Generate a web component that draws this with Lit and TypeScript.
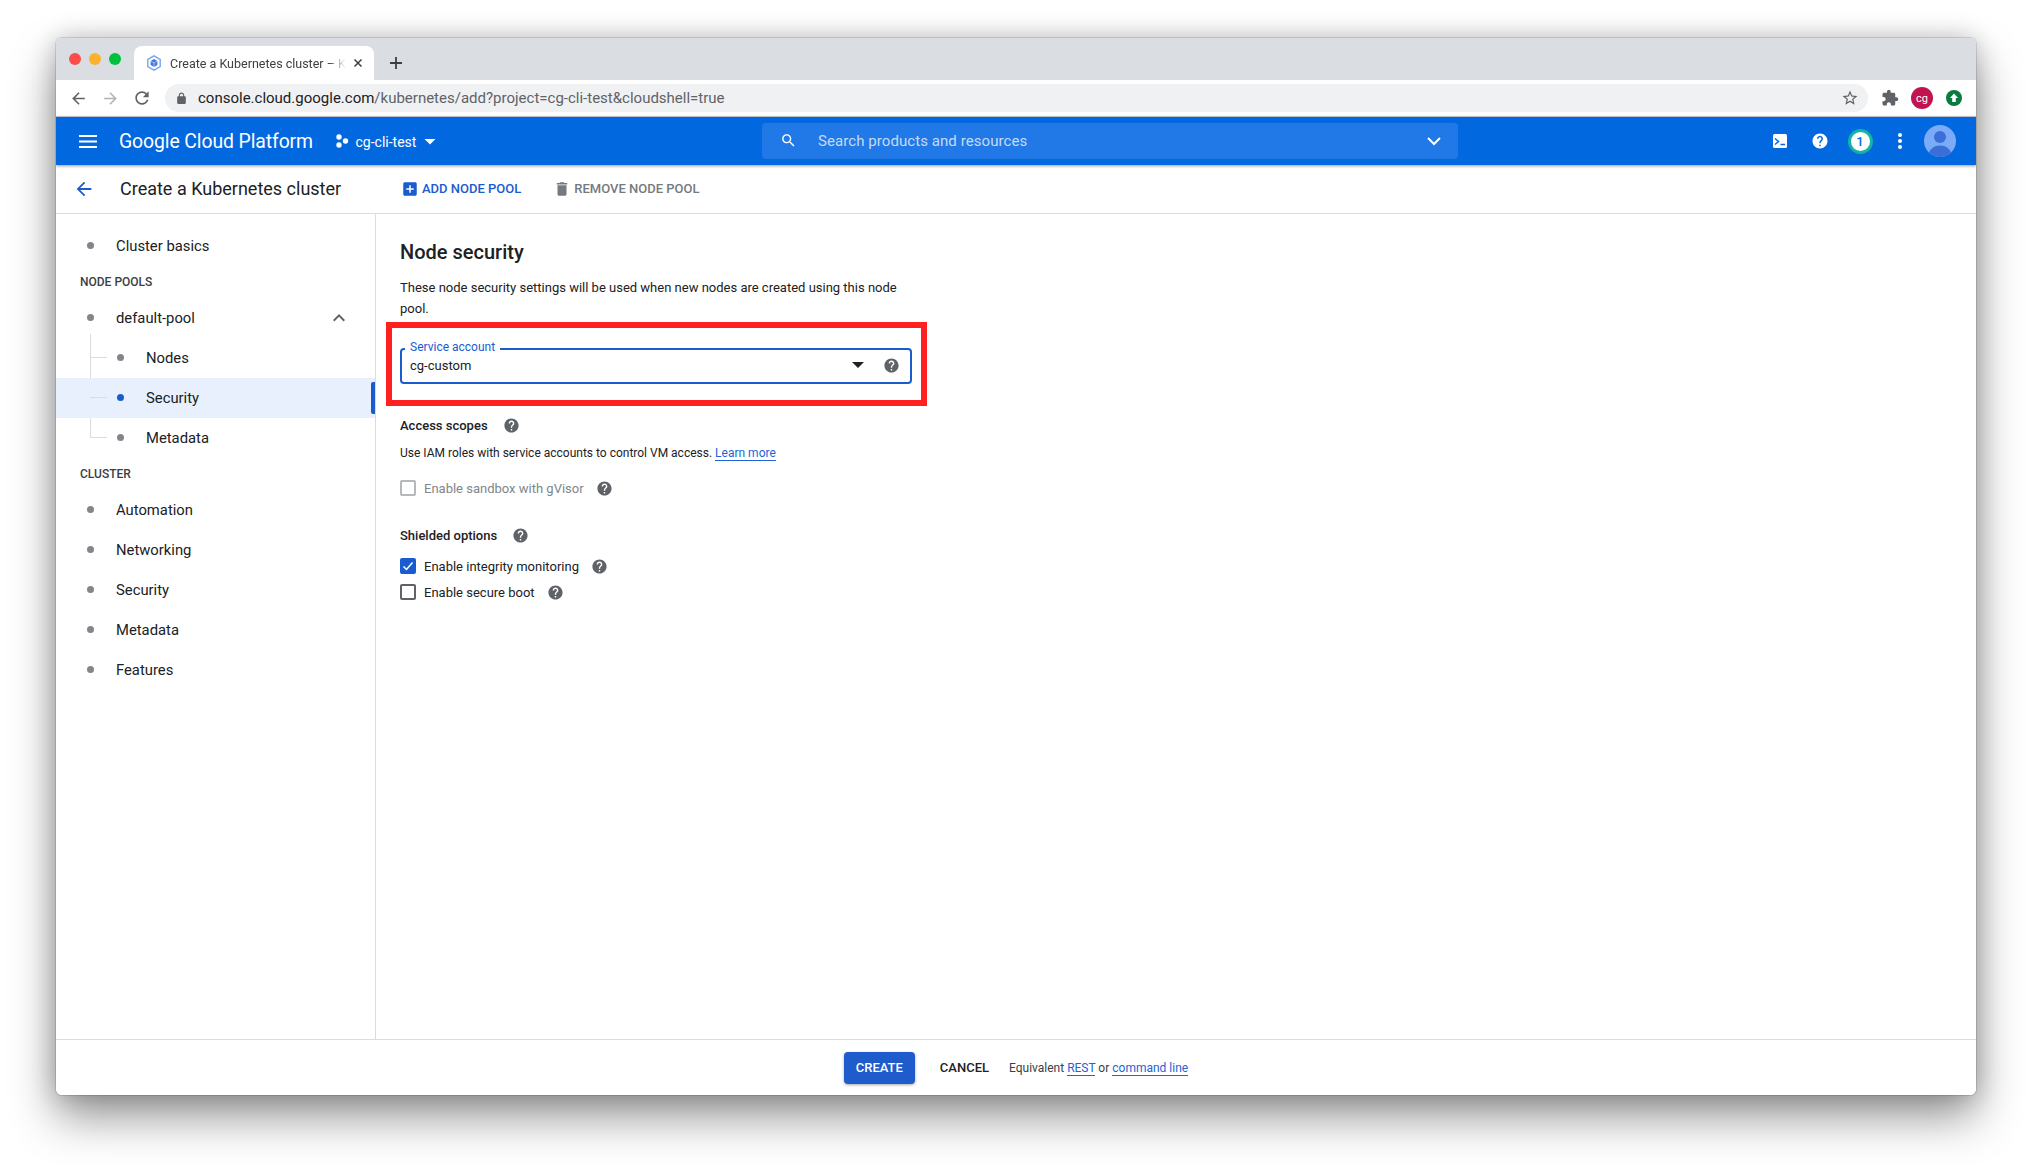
import { LitElement, css, html, svg } from 'lit'
import { customElement } from 'lit/decorators.js'

const HELP = 'M12 2C6.48 2 2 6.48 2 12s4.48 10 10 10 10-4.48 10-10S17.52 2 12 2zm1 17h-2v-2h2v2zm2.07-7.75l-.9.92C13.45 12.9 13 13.5 13 15h-2v-.5c0-1.1.45-2.1 1.17-2.83l1.24-1.26c.37-.36.59-.86.59-1.41 0-1.1-.9-2-2-2s-2 .9-2 2H8c0-2.21 1.79-4 4-4s4 1.79 4 4c0 .88-.36 1.68-.93 2.25z'

const icon = (d: string, size = 24, color = 'currentColor') => html`
  <svg width=${size} height=${size} viewBox="0 0 24 24" fill=${color}>${svg`<path d=${d}></path>`}</svg>
`

const help = () => html`<span class="help">${icon(HELP, 17, '#5f6368')}</span>`

const navItem = (label: string, sub = false, active = false) => html`
  <div class="nav-row ${sub ? 'sub' : ''} ${active ? 'active' : ''}">
    <span class="bullet"></span>
    <span>${label}</span>
  </div>
`

@customElement('app-root')
export class AppRoot extends LitElement {
  static styles = css`
    :host {
      display: block;
      height: 1169px;
      padding: 38px 56px 0;
      box-sizing: border-box;
      overflow: hidden;
      background: #fff;
      font-family: Roboto, "Liberation Sans", sans-serif;
      color: #202124;
    }

    .window {
      height: 1057px;
      display: flex;
      flex-direction: column;
      border-radius: 6px;
      overflow: hidden;
      background: #fff;
    }

    .frame {
      border-radius: 6px;
      box-shadow: 0 22px 46px rgba(0, 0, 0, 0.42), 0 0 24px rgba(0, 0, 0, 0.2), 0 0 0 1px rgba(0, 0, 0, 0.12);
    }

    .tabstrip {
      height: 42px;
      flex: none;
      background: #dadde1;
      display: flex;
      align-items: flex-end;
      padding-left: 13px;
    }

    .lights {
      align-self: flex-start;
      display: flex;
      gap: 8px;
      margin-top: 15px;
      width: 65px;
      flex: none;
    }

    .lights span {
      width: 12px;
      height: 12px;
      border-radius: 50%;
    }

    .tab {
      width: 240px;
      height: 34px;
      flex: none;
      background: #fff;
      border-radius: 8px 8px 0 0;
      display: flex;
      align-items: center;
      padding-left: 12px;
      box-sizing: border-box;
      font-size: 12.5px;
      color: #3c4043;
      position: relative;
    }

    .tab-title {
      width: 176px;
      margin-left: 8px;
      white-space: nowrap;
      -webkit-mask-image: linear-gradient(to right, #000 90%, transparent);
      mask-image: linear-gradient(to right, #000 90%, transparent);
    }

    .tab-close {
      display: flex;
      margin-left: 6px;
    }

    .new-tab {
      display: flex;
      margin: 0 0 10px 15px;
      color: #3c4043;
    }

    .toolbar {
      height: 37px;
      flex: none;
      box-sizing: border-box;
      background: #fff;
      border-bottom: 1px solid #c8cbcf;
      display: flex;
      align-items: flex-start;
      padding: 4px 6px 0;
    }

    .tool {
      width: 32px;
      height: 28px;
      flex: none;
      display: flex;
      align-items: center;
      justify-content: center;
      color: #5f6368;
    }

    .pill {
      flex: 1;
      height: 28px;
      margin: 0 6px 0 7px;
      border-radius: 14px;
      background: #f0f1f3;
      display: flex;
      align-items: center;
      padding-left: 10px;
      font-size: 15px;
      color: #5f6368;
    }

    .pill b {
      font-weight: 400;
      color: #202124;
    }

    .pill .url {
      margin-left: 10px;
      flex: 1;
    }

    .appbar {
      height: 48px;
      flex: none;
      background: #0268e0;
      color: #fff;
      display: flex;
      align-items: center;
      box-shadow: 0 1px 3px rgba(0, 0, 0, 0.4);
      position: relative;
      z-index: 1;
    }

    .app-left {
      width: 706px;
      flex: none;
      box-sizing: border-box;
      padding-left: 16px;
      display: flex;
      align-items: center;
    }

    .burger {
      display: flex;
      width: 32px;
      justify-content: center;
    }

    .brand {
      font-size: 19.4px;
      margin-left: 15px;
      width: 215.5px;
      letter-spacing: -0.1px;
    }

    .project {
      display: flex;
      align-items: center;
      font-size: 14px;
    }

    .project span {
      margin: 1px 2px 0 7px;
    }

    .search {
      width: 696px;
      height: 36px;
      flex: none;
      box-sizing: border-box;
      border-radius: 4px;
      background: #2079e6;
      display: flex;
      align-items: center;
      padding: 0 16px 1px 18px;
      font-size: 15px;
      color: #c5daf7;
    }

    .search span {
      flex: 1;
      margin-left: 21px;
      letter-spacing: 0.07px;
    }

    .app-right {
      margin-left: auto;
      padding-right: 16px;
      display: flex;
      align-items: center;
    }

    .app-btn {
      width: 40px;
      height: 40px;
      display: flex;
      align-items: center;
      justify-content: center;
    }

    .badge {
      width: 25px;
      height: 25px;
      box-sizing: border-box;
      flex: none;
      border-radius: 50%;
      border: 3px solid #12b5a0;
      background: #fff;
      color: #0268e0;
      font-size: 13px;
      font-weight: 500;
      display: flex;
      align-items: center;
      justify-content: center;
    }

    .subheader {
      height: 49px;
      flex: none;
      box-sizing: border-box;
      border-bottom: 1px solid #dadce0;
      display: flex;
      align-items: center;
      padding: 0 0 1px 17px;
    }

    .sub-back {
      display: flex;
      width: 23px;
      color: #1a5cd0;
    }

    .sub-title {
      width: 281px;
      flex: none;
      margin-left: 24px;
      font-size: 18px;
    }

    .action {
      display: flex;
      align-items: center;
      gap: 3px;
      font-size: 13px;
      font-weight: 500;
      color: #1a5cd0;
    }

    .action.off {
      color: #757a80;
      margin-left: 32px;
    }

    .main {
      flex: 1;
      display: flex;
      min-height: 0;
    }

    .sidebar {
      width: 320px;
      flex: none;
      box-sizing: border-box;
      border-right: 1px solid #dadce0;
      padding-top: 12px;
      font-size: 14.8px;
    }

    .nav-row {
      height: 40px;
      display: flex;
      align-items: center;
      padding-left: 31px;
      position: relative;
    }

    .bullet {
      width: 7px;
      height: 7px;
      border-radius: 50%;
      background: #80868b;
      margin: 0 22px 2px 0;
      flex: none;
    }

    .nav-row.sub {
      padding-left: 61px;
    }

    .nav-row.sub .bullet {
      margin-right: 22px;
    }

    .nav-row.sub::before {
      content: '';
      position: absolute;
      left: 34px;
      top: 19px;
      width: 17px;
      height: 1px;
      background: #dadce0;
    }

    .nav-row.active {
      background: #e8f0fe;
    }

    .nav-row.active .bullet {
      background: #1a5cd0;
    }

    .nav-row.active::after {
      content: '';
      position: absolute;
      right: 0;
      top: 4px;
      width: 4px;
      height: 32px;
      border-radius: 2px 0 0 2px;
      background: #1a5cd0;
    }

    .tree {
      position: relative;
    }

    .tree::before {
      content: '';
      position: absolute;
      left: 34px;
      top: -4px;
      width: 1px;
      height: 104px;
      background: #dadce0;
    }

    .nav-head {
      height: 32px;
      display: flex;
      align-items: center;
      padding-left: 24px;
      font-size: 12px;
      font-weight: 500;
      color: #3c4043;
    }

    .chevron {
      display: flex;
      margin-left: auto;
      margin-right: 24px;
      color: #5f6368;
    }

    .content {
      flex: 1;
      padding: 26px 0 0 24px;
      font-size: 13px;
    }

    h1 {
      margin: 0;
      font-size: 20px;
      line-height: 24px;
      font-weight: 500;
    }

    .intro {
      width: 510px;
      margin: 13px 0 0;
      line-height: 21px;
    }

    .callout {
      width: 541px;
      height: 84px;
      box-sizing: border-box;
      margin: 3px 0 0 -14px;
      border: 6px solid #ff2020;
      padding: 20px 0 0 8px;
    }

    .field {
      width: 512px;
      height: 36px;
      box-sizing: border-box;
      border: 2px solid #1a5cd0;
      border-radius: 4px;
      display: flex;
      align-items: center;
      padding: 0 10px 2px 8px;
      position: relative;
      font-size: 13px;
    }

    .field label {
      position: absolute;
      left: 3px;
      top: -10px;
      padding: 0 5px;
      background: #fff;
      font-size: 12px;
      line-height: 14px;
      color: #1a5cd0;
    }

    .field .value {
      flex: 1;
    }

    .field .caret {
      display: flex;
      color: #202124;
      margin-right: 19px;
    }

    .row {
      height: 20px;
      display: flex;
      align-items: center;
    }

    .row .help {
      margin-left: 12px;
    }

    .help {
      display: flex;
    }

    .label-row {
      font-weight: 500;
    }

    .label-row .help {
      margin-left: 15px;
    }

    .scopes {
      margin-top: 9px;
    }

    .iam {
      margin-top: 8px;
      font-size: 12px;
    }

    .gvisor {
      margin-top: 15px;
      color: #80868b;
    }

    .shielded {
      margin-top: 27px;
    }

    .integrity {
      margin-top: 11px;
    }

    .boot {
      margin-top: 6px;
    }

    .check {
      width: 16px;
      height: 16px;
      flex: none;
      box-sizing: border-box;
      border: 2px solid #5f6368;
      border-radius: 2px;
      margin-right: 8px;
      display: flex;
    }

    .check.off {
      border-color: #b4b7bb;
    }

    .check.on {
      border-color: #1a5cd0;
      background: #1a5cd0;
    }

    a {
      color: #2463d6;
      text-decoration: none;
      border-bottom: 1px solid #2463d6;
    }

    .footer {
      height: 56px;
      flex: none;
      box-sizing: border-box;
      border-top: 1px solid #dadce0;
      display: flex;
      align-items: center;
      justify-content: center;
    }

    .create {
      width: 71px;
      height: 32px;
      display: flex;
      align-items: center;
      justify-content: center;
      border-radius: 4px;
      background: #1e5ccb;
      color: #fff;
      font-size: 13px;
      font-weight: 500;
      box-shadow: 0 1px 3px rgba(0, 0, 0, 0.35);
    }

    .cancel {
      margin-left: 25px;
      font-size: 13px;
      font-weight: 500;
    }

    .equiv {
      margin-left: 20px;
      font-size: 12px;
      color: #3c4043;
    }
  `;

  render() {
    return html`
      <div class="frame">
        <div class="window">
          <div class="tabstrip">
            <div class="lights">
              <span style="background:#fc4c4c"></span>
              <span style="background:#fdb12c"></span>
              <span style="background:#00c13e"></span>
            </div>
            <div class="tab">
              <svg width="16" height="16" viewBox="0 0 16 16">
                <path d="M8 .8l6.200 3.600v7.200L8 15.200l-6.200-3.600V4.400z" fill="#fff" stroke="#7aa3ee" stroke-width="1.400"></path>
                <path d="M8 4l3.400 2v4L8 12 4.600 10V6z" fill="#3f78e0"></path>
                <path d="M4.600 6L8 8l3.400-2M8 8v4" fill="none" stroke="#cfe0fb" stroke-width=".7"></path>
              </svg>
              <div class="tab-title">Create a Kubernetes cluster – K</div>
              <span class="tab-close">
                <svg width="12" height="12" viewBox="0 0 12 12" stroke="#3c4043" stroke-width="1.500"><path d="M2.500 2.500l7 7M9.500 2.500l-7 7"></path></svg>
              </span>
            </div>
            <span class="new-tab">
              <svg width="14" height="14" viewBox="0 0 14 14" stroke="#3c4043" stroke-width="1.800"><path d="M7 1v12M1 7h12"></path></svg>
            </span>
          </div>

          <div class="toolbar">
            <span class="tool">${icon('M20 11H7.830l5.590-5.590L12 4l-8 8 8 8 1.410-1.410L7.830 13H20z', 19)}</span>
            <span class="tool" style="color:#b0b3b7">${icon('M12 4l-1.410 1.410L16.170 11H4v2h12.170l-5.580 5.590L12 20l8-8z', 19)}</span>
            <span class="tool">${icon('M17.650 6.350C16.200 4.900 14.210 4 12 4c-4.420 0-7.990 3.580-7.990 8s3.570 8 7.990 8c3.730 0 6.840-2.550 7.730-6h-2.080c-.82 2.330-3.040 4-5.650 4-3.310 0-6-2.690-6-6s2.690-6 6-6c1.660 0 3.140.69 4.220 1.780L13 11h7V4l-2.350 2.350z', 20)}</span>
            <div class="pill">
              ${icon('M18 8h-1V6c0-2.760-2.240-5-5-5S7 3.240 7 6v2H6c-1.100 0-2 .9-2 2v10c0 1.100.9 2 2 2h12c1.100 0 2-.9 2-2V10c0-1.100-.9-2-2-2zM9 6c0-1.660 1.340-3 3-3s3 1.340 3 3v2H9V6z', 13, '#5f6368')}
              <span class="url"><b>console.cloud.google.com</b>/kubernetes/add?project=cg-cli-test&amp;cloudshell=true</span>
              <span class="tool" style="width:28px;margin-right:4px">${icon('M22 9.240l-7.190-.62L12 2 9.190 8.630 2 9.240l5.460 4.730L5.820 21 12 17.270 18.180 21l-1.630-7.030L22 9.240zM12 15.400l-3.760 2.270 1-4.280-3.320-2.880 4.380-.38L12 6.100l1.710 4.040 4.380.38-3.320 2.880 1 4.280L12 15.400z', 18)}</span>
            </div>
            <span class="tool">${icon('M20.500 11H19V7c0-1.100-.9-2-2-2h-4V3.500C13 2.120 11.880 1 10.500 1S8 2.120 8 3.500V5H4c-1.100 0-1.990.9-1.990 2v3.800H3.500c1.490 0 2.700 1.210 2.700 2.700s-1.210 2.700-2.700 2.700H2V20c0 1.100.9 2 2 2h3.800v-1.500c0-1.490 1.210-2.700 2.700-2.700 1.490 0 2.700 1.210 2.700 2.700V22H17c1.100 0 2-.9 2-2v-4h1.500c1.380 0 2.500-1.120 2.500-2.500S21.880 11 20.500 11z', 18, '#5f6368')}</span>
            <span class="tool">
              <svg width="22" height="22" viewBox="0 0 22 22">
                <circle cx="11" cy="11" r="11" fill="#c2134d"></circle>
                <text x="11" y="14.500" text-anchor="middle" font-size="11" font-family="Roboto, sans-serif" fill="#fff">cg</text>
              </svg>
            </span>
            <span class="tool">
              <svg width="16" height="16" viewBox="0 0 16 16">
                <circle cx="8" cy="8" r="8" fill="#0b7a3e"></circle>
                <path d="M8 3.500L12 8H9.800v4H6.200V8H4z" fill="#fff"></path>
              </svg>
            </span>
          </div>

          <div class="appbar">
            <div class="app-left">
              <span class="burger">
                <svg width="18" height="13" viewBox="0 0 18 13" fill="#fff"><path d="M0 0h18v2H0zM0 5.500h18v2H0zM0 11h18v2H0z"></path></svg>
              </span>
              <span class="brand">Google Cloud Platform</span>
              <div class="project">
                <svg width="14" height="14" viewBox="0 0 14 14" fill="#fff">
                  <circle cx="4" cy="3" r="2.700"></circle>
                  <circle cx="10.500" cy="7" r="2.700"></circle>
                  <circle cx="4" cy="11" r="2.700"></circle>
                </svg>
                <span>cg-cli-test</span>
                <svg width="24" height="24" viewBox="0 0 24 24" fill="#fff"><path d="M6.500 10l5.500 5.500 5.500-5.500z"></path></svg>
              </div>
            </div>
            <div class="search">
              ${icon('M15.500 14h-.79l-.28-.27C15.410 12.590 16 11.110 16 9.500 16 5.910 13.090 3 9.500 3S3 5.910 3 9.500 5.910 16 9.500 16c1.610 0 3.090-.59 4.230-1.570l.27.28v.79l5 4.990L20.490 19l-4.990-5zm-6 0C7.010 14 5 11.990 5 9.500S7.010 5 9.500 5 14 7.010 14 9.500 11.990 14 9.500 14z', 17, '#fff')}
              <span>Search products and resources</span>
              <svg width="16" height="16" viewBox="0 0 16 16" fill="none" stroke="#fff" stroke-width="2"><path d="M2 5l6 6 6-6"></path></svg>
            </div>
            <div class="app-right">
              <span class="app-btn">
                <svg width="14" height="14" viewBox="0 0 14 14">
                  <rect width="14" height="14" rx="1.500" fill="#fff"></rect>
                  <path d="M2 4.500L5.500 7.500 2 10.500M7.500 10.500h4.500" fill="none" stroke="#0268e0" stroke-width="1.500"></path>
                </svg>
              </span>
              <span class="app-btn">
                <svg width="18" height="18" viewBox="0 0 24 24" fill="#fff"><path d=${HELP}></path></svg>
              </span>
              <span class="app-btn"><span class="badge">1</span></span>
              <span class="app-btn">
                <svg width="4" height="16" viewBox="0 0 4 16" fill="#fff"><circle cx="2" cy="2" r="2"></circle><circle cx="2" cy="8" r="2"></circle><circle cx="2" cy="14" r="2"></circle></svg>
              </span>
              <span class="app-btn">
                <svg width="32" height="32" viewBox="0 0 32 32">
                  <defs><clipPath id="av"><circle cx="16" cy="16" r="16"></circle></clipPath></defs>
                  <g clip-path="url(#av)">
                    <rect width="32" height="32" fill="#7baaf7"></rect>
                    <circle cx="16" cy="12" r="6" fill="#3b6fd8"></circle>
                    <ellipse cx="16" cy="29" rx="11" ry="8.500" fill="#3b6fd8"></ellipse>
                  </g>
                </svg>
              </span>
            </div>
          </div>

          <div class="subheader">
            <span class="sub-back">${icon('M20 11H7.830l5.590-5.590L12 4l-8 8 8 8 1.410-1.410L7.830 13H20z', 22)}</span>
            <span class="sub-title">Create a Kubernetes cluster</span>
            <span class="action">
              ${icon('M19 3H5c-1.110 0-2 .9-2 2v14c0 1.100.89 2 2 2h14c1.100 0 2-.9 2-2V5c0-1.100-.9-2-2-2zm-2 10h-4v4h-2v-4H7v-2h4V7h2v4h4v2z', 18)}
              ADD NODE POOL
            </span>
            <span class="action off">
              ${icon('M6 19c0 1.100.9 2 2 2h8c1.100 0 2-.9 2-2V7H6v12zM19 4h-3.500l-1-1h-5l-1 1H5v2h14V4z', 18)}
              REMOVE NODE POOL
            </span>
          </div>

          <div class="main">
            <nav class="sidebar">
              ${navItem('Cluster basics')}
              <div class="nav-head">NODE POOLS</div>
              <div class="nav-row">
                <span class="bullet"></span>
                <span>default-pool</span>
                <span class="chevron">${icon('M7.410 15.410L12 10.830l4.590 4.580L18 14l-6-6-6 6z', 24)}</span>
              </div>
              <div class="tree">
                ${navItem('Nodes', true)}
                ${navItem('Security', true, true)}
                ${navItem('Metadata', true)}
              </div>
              <div class="nav-head">CLUSTER</div>
              ${['Automation', 'Networking', 'Security', 'Metadata', 'Features'].map(l => navItem(l))}
            </nav>

            <section class="content">
              <h1>Node security</h1>
              <p class="intro">These node security settings will be used when new nodes are created using this node pool.</p>
              <div class="callout">
                <div class="field">
                  <label>Service account</label>
                  <span class="value">cg-custom</span>
                  <span class="caret">
                    <svg width="12" height="6" viewBox="0 0 12 6" fill="#202124"><path d="M0 0h12L6 6z"></path></svg>
                  </span>
                  <span class="help">${icon(HELP, 17, '#5f6368')}</span>
                </div>
              </div>

              <div class="row label-row scopes">Access scopes ${help()}</div>
              <div class="row iam">
                <span>Use IAM roles with service accounts to control VM access.&nbsp;<a>Learn more</a></span>
              </div>
              <div class="row gvisor"><span class="check off"></span>Enable sandbox with gVisor ${help()}</div>

              <div class="row label-row shielded">Shielded options ${help()}</div>
              <div class="row integrity">
                <span class="check on">
                  <svg width="12" height="12" viewBox="0 0 12 12" fill="none" stroke="#fff" stroke-width="1.500"><path d="M1.500 6.500l3 3 6-7"></path></svg>
                </span>
                Enable integrity monitoring ${help()}
              </div>
              <div class="row boot"><span class="check"></span>Enable secure boot ${help()}</div>
            </section>
          </div>

          <div class="footer">
            <span class="create">CREATE</span>
            <span class="cancel">CANCEL</span>
            <span class="equiv">Equivalent <a>REST</a> or <a>command line</a></span>
          </div>
        </div>
      </div>
    `;
  }
}

declare global {
  interface HTMLElementTagNameMap {
    'app-root': AppRoot
  }
}
